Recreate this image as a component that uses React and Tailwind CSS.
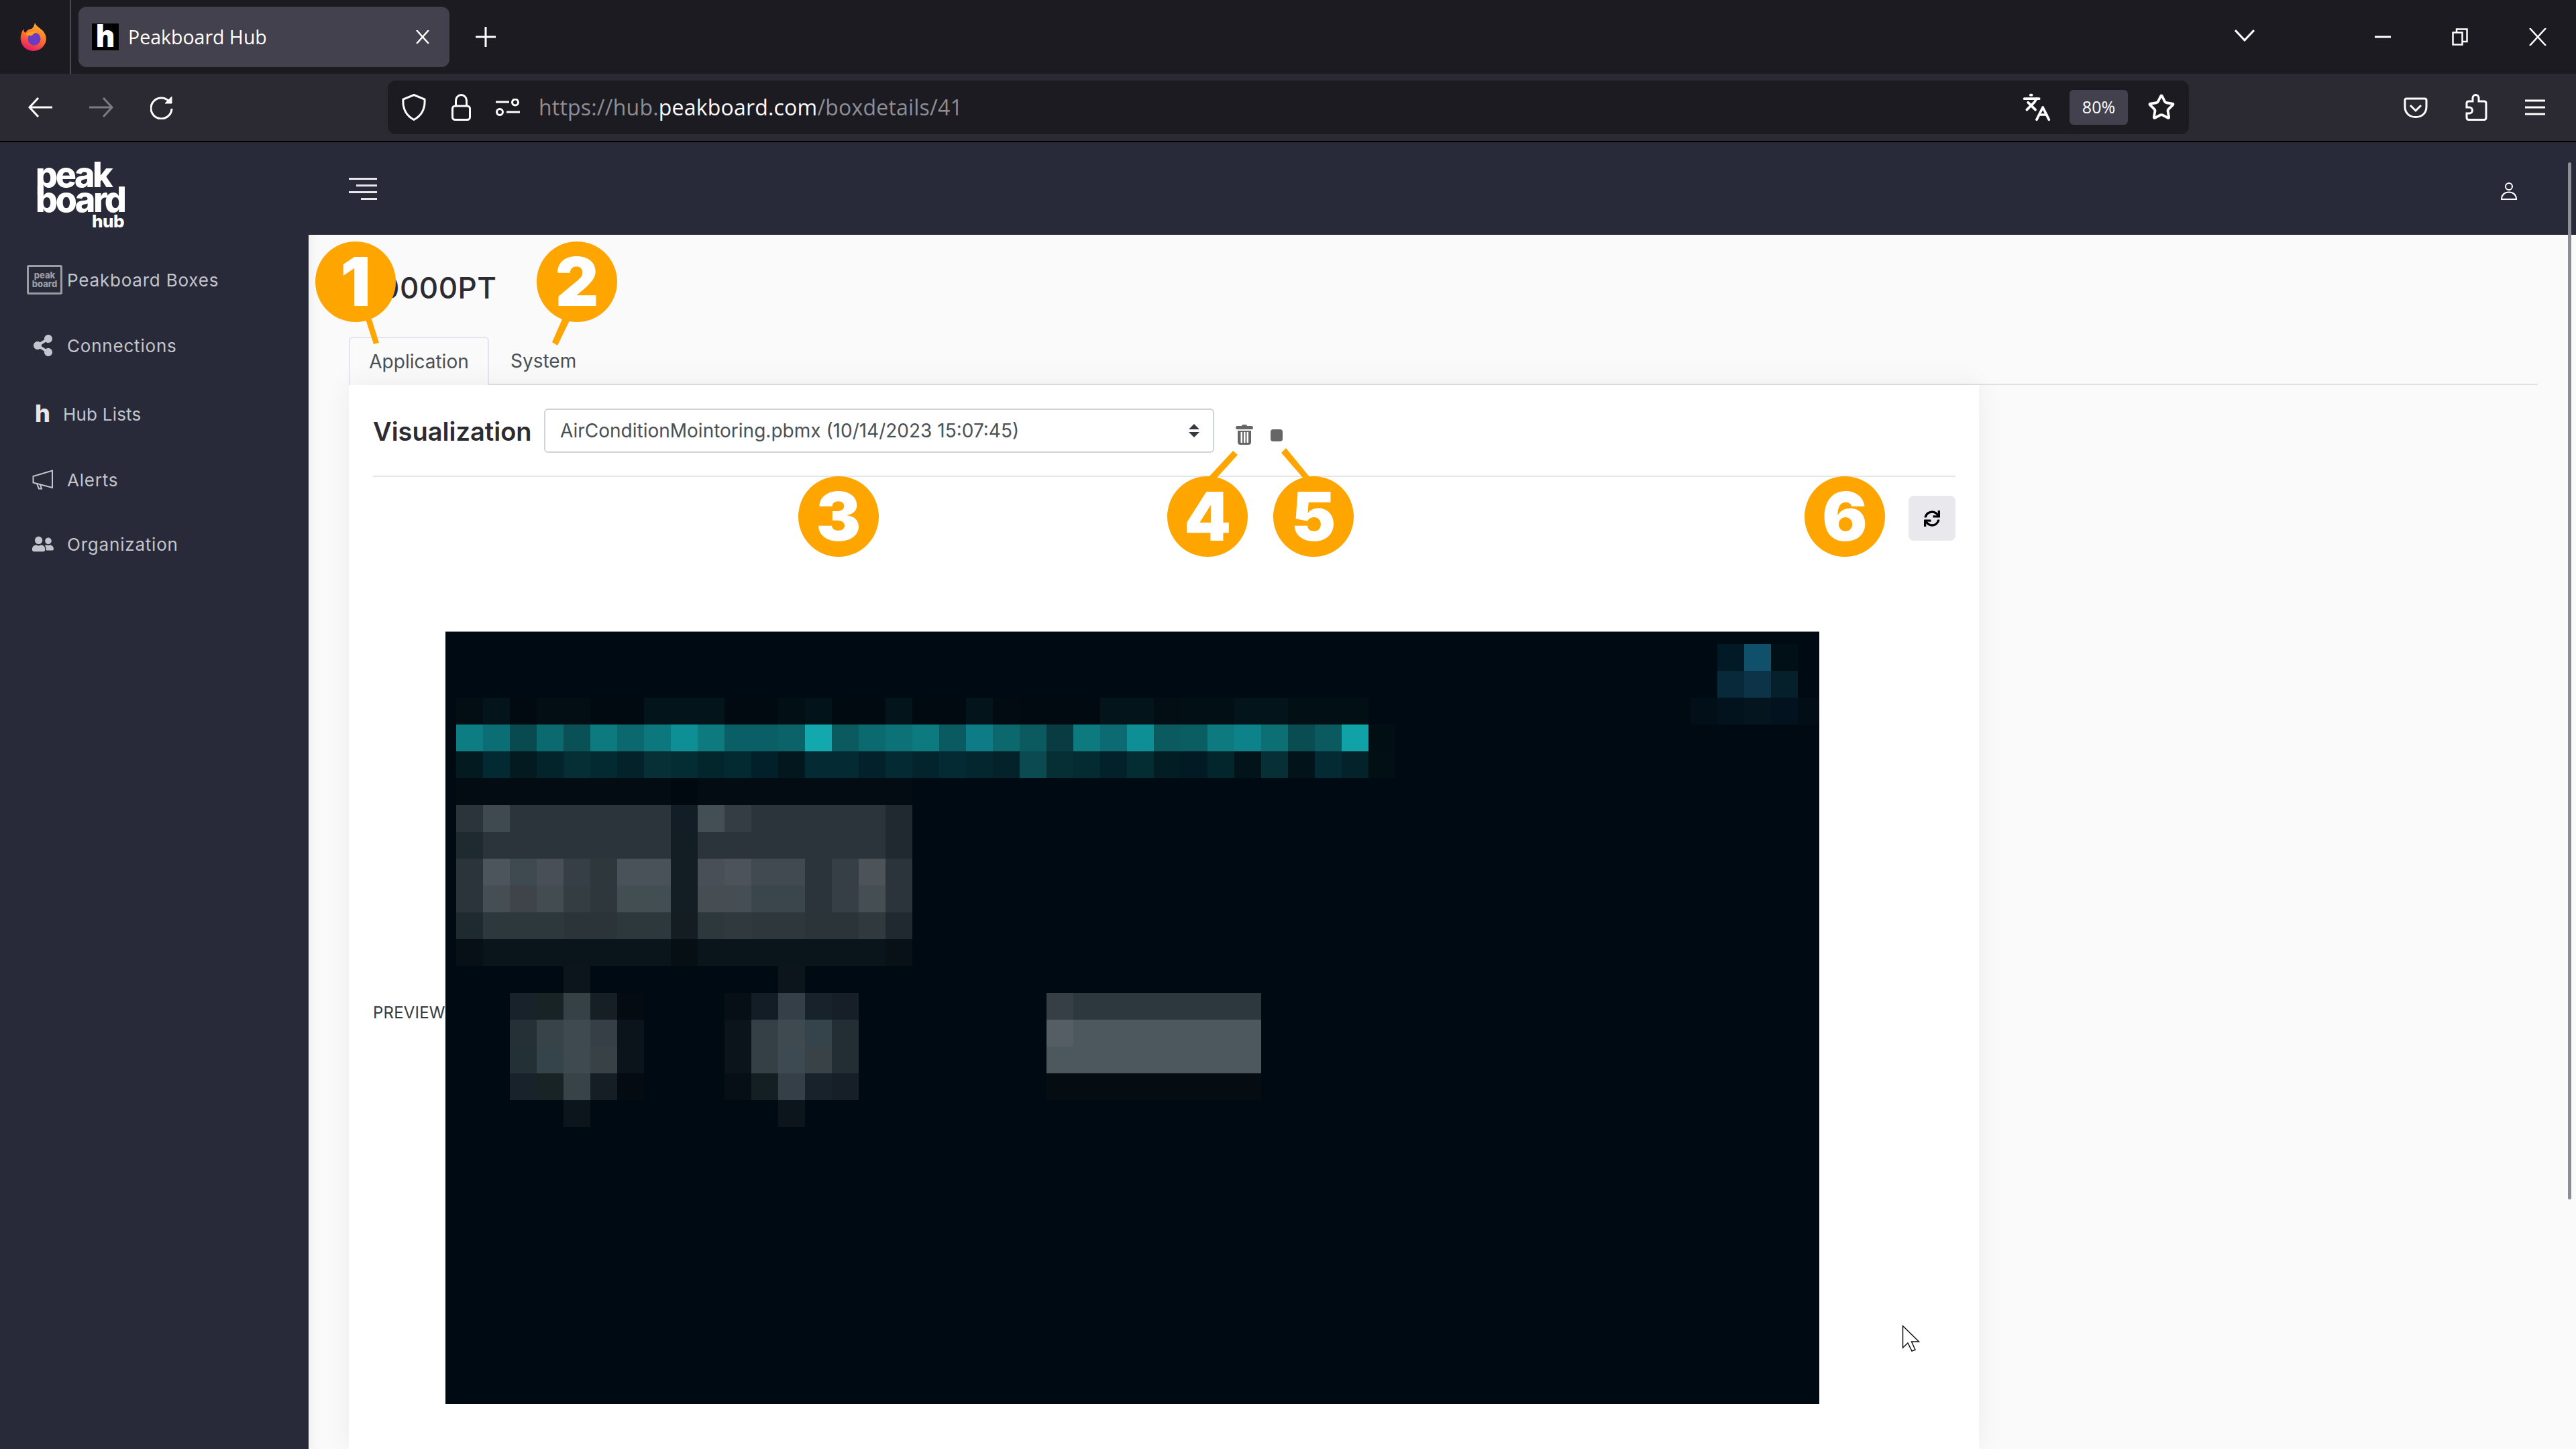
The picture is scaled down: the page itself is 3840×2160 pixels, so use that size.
import React from 'react';
import { Languages, Star } from 'lucide-react';
import { FaShareAlt, FaSync, FaUserFriends } from 'react-icons/fa';

// pixelated preview, one entry per 40px block: [x of first block, y, colours]
const blocks = [
    [680, 1040, ['#020e14','#03151b','#010a10','#020e13','#020e13','#010a11','#010a11','#03151b','#03141a','#03151b','#010a11','#010a11','#020f15','#03131a','#010a11','#010a11','#03151b','#010a11','#010a11','#03151b','#010b11','#010a11','#010a11','#010a11','#03151b','#03151b','#020e14','#020f15','#021015','#03151b','#03151b','#021015','#021015','#021015']],
    [680, 1080, ['#0c7d82','#0b6e74','#094a50','#0b6a70','#0a5057','#0c7a7e','#0a686e','#0c777c','#0e8f96','#0c7a7e','#0a5f66','#0a5f66','#0b6268','#12a8ad','#0a5a60','#0b6a70','#0c7278','#0c7a7e','#0a5a62','#0e7c86','#0b686c','#0a5a60','#093b42','#0c7a7e','#0b6a72','#0e8f96','#0a5a60','#0a5e62','#0c7a7e','#0d828a','#0b6f74','#094c52','#0a5a60','#10a2a6','#010e13']],
    [680, 1120, ['#021a20','#032a32','#021a20','#03242b','#062e35','#042a31','#03222a','#062f36','#042c33','#03262c','#042a31','#02202a','#02181e','#042b33','#042b33','#03212a','#042b33','#03242c','#042b33','#03262f','#03222a','#0a4a50','#062e35','#042b31','#03212a','#042c33','#021e24','#021a24','#03262c','#02141a','#062f36','#02141a','#042b33','#03222a','#020f14']],
    [680, 1160, ['#040c13','#040c13','#040c13','#040c13','#040c13','#040c13','#040c13','#040c13','#010910','#040c13','#040c13','#040c13','#040c13','#040c13','#040c13','#040c13','#040c13']],
    [680, 1200, ['#2a343a','#3f4a50','#2a343a','#2a343a','#2a343a','#2a343a','#2a343a','#2a343a','#131d25','#444f55','#333d42','#2a343a','#2a343a','#2a343a','#2a343a','#2a343a','#1f292f']],
    [680, 1240, ['#1f2a30','#2a343a','#2a343a','#2a343a','#2a343a','#2a343a','#2a343a','#2a343a','#131d24','#2a343a','#2a343a','#2a343a','#2a343a','#2a343a','#2a343a','#2a343a','#1f292f']],
    [680, 1280, ['#2a343a','#4c555b','#3f4a50','#484f56','#363f45','#2d373c','#4a5259','#4a5259','#131d24','#484f56','#4c545a','#404a50','#404a50','#2a343a','#363f45','#4c545a','#2a343a']],
    [680, 1320, ['#2a343a','#444e53','#3e444a','#434c50','#333d42','#2d373c','#434e53','#434e53','#131d24','#464d53','#444e53','#3b464c','#3b464c','#2a343a','#363f45','#444e53','#2a343a']],
    [680, 1360, ['#1f2a30','#2d383d','#2d383d','#2d383d','#2a3439','#2a3439','#2d383d','#2d383d','#131d22','#2d383d','#30393d','#2d373c','#2d373c','#2a3439','#2a3439','#30393d','#1f292f']],
    [680, 1400, ['#071016','#0a141b','#0a141b','#0a141b','#0a141b','#0a141b','#0a141b','#0a141b','#060f13','#0a141b','#0a141b','#0a141b','#0a141b','#0a141b','#0a141b','#0a141b','#081116']],
    [840, 1440, ['#0b151b']],
    [1160, 1440, ['#0b151b']],
    [760, 1480, ['#17222b','#182326','#364146','#151f24','#040c12']],
    [760, 1520, ['#243035','#384349','#3f4a50','#353f45','#0a141a']],
    [760, 1560, ['#233036','#35444b','#3e4a50','#384246','#0a141a']],
    [760, 1600, ['#17222b','#182326','#384347','#151e25','#040c12']],
    [840, 1640, ['#0b151b']],
    [1080, 1480, ['#060f15','#131d25','#353f48','#18222a','#161f27']],
    [1080, 1520, ['#0a141a','#343f46','#3f4a50','#35444b','#222e33']],
    [1080, 1560, ['#0a141a','#343f46','#3d4a52','#394246','#222e33']],
    [1080, 1600, ['#060f15','#141f24','#353f48','#18222a','#161f27']],
    [1160, 1640, ['#0b151b']],
    [1560, 1480, ['#363f45','#2d383e','#2d383e','#2d383e','#2d383e','#2d383e','#2d383e','#2d383e']],
    [1560, 1520, ['#555e64','#4c585e','#4c585e','#4c585e','#4c585e','#4c585e','#4c585e','#4c585e']],
    [1560, 1560, ['#4c585e','#4c585e','#4c585e','#4c585e','#4c585e','#4c585e','#4c585e','#4c585e']],
    [1560, 1600, ['#050d13','#050d13','#050d13','#050d13','#050d13','#050d13','#050d13','#050d13']],
    [2560, 960, ['#021a26','#10506a','#010f16']],
    [2560, 1000, ['#08293a','#0c3347','#051f2b']],
    [2520, 1040, ['#020f18','#03131e','#04151f','#03121f','#020d16']],
];

const Preview = () => (
    <svg width="2048" height="1152" viewBox="664 941 2048 1152" shapeRendering="crispEdges" className="shrink-0">
        <rect x="664" y="941" width="2048" height="1152" fill="#000a12" />
        {blocks.map(([x, y, colours]) =>
            colours.map((c, i) => <rect key={`${x}-${y}-${i}`} x={x + i * 40} y={y} width="40" height="40" fill={c} />)
        )}
        <rect x="664" y="941" width="2048" height="1" fill="#8a8f94" />
    </svg>
);

const Firefox = () => (
    <svg width="40" height="42" viewBox="0 0 40 42">
        <defs>
            <linearGradient id="fx" x1="0.7" y1="0" x2="0.3" y2="1">
                <stop offset="0" stopColor="#ffb52e" />
                <stop offset="0.55" stopColor="#ff6a2b" />
                <stop offset="1" stopColor="#e5156b" />
            </linearGradient>
        </defs>
        <path d="M22 0C24 5 30 8 34 12C38 17 40 22 38 29C35 37 28 42 20 42C10 42 2 35 1 26C0 20 2 14 5 9C5 12 6 14 8 15C10 11 14 9 17 9C20 7 21 4 22 0Z" fill="url(#fx)" />
        <circle cx="21" cy="24" r="9.5" fill="#6b3bc4" />
        <path d="M8 17C13 13 20 12 25 14C21 15 19 17 18 19C14 19 11 19 8 17Z" fill="#ffa31f" />
    </svg>
);

const HLogo = ({ className }) => <span className={`font-extrabold leading-none ${className}`}>h</span>;

const Ico = ({ w, h, children, className = 'text-white' }) => (
    <svg width={w} height={h} viewBox={`0 0 ${w} ${h}`} fill="none" stroke="currentColor" strokeWidth="3" className={`shrink-0 ${className}`}>
        {children}
    </svg>
);

const TabBar = () => (
    <div className="h-[110px] bg-[#1c1b22] flex items-stretch text-white shrink-0">
        <div className="w-[106px] border-r-2 border-[#4a4950] flex items-center pl-[30px]">
            <Firefox />
        </div>
        <div className="ml-[11px] mt-[10px] w-[553px] h-[90px] bg-[#42414d] rounded-xl flex items-center pl-[20px] pr-[30px]">
            <div className="w-[40px] h-[40px] bg-black flex items-center justify-center">
                <HLogo className="text-white text-[44px] -mt-[5px]" />
            </div>
            <span className="ml-[14px] text-[28.5px]">Peakboard Hub</span>
            <Ico w={20} h={20} className="ml-auto text-white">
                <path d="M1 0L19 20M19 0L1 20" strokeWidth="2.5" />
            </Ico>
        </div>
        <div className="ml-[39px] flex items-center">
            <Ico w={30} h={30}>
                <path d="M15 0V30M0 15H30" />
            </Ico>
        </div>
        <div className="ml-auto flex items-center pr-[44px]">
            <Ico w={30} h={18} className="mr-[179px] -mt-[4px]">
                <path d="M1 1L15 16L29 1" />
            </Ico>
            <Ico w={24} h={4} className="mr-[91px]">
                <path d="M0 2H24" />
            </Ico>
            <Ico w={24} h={26} className="mr-[91px]">
                <path d="M1.5 6.5H15.5V24.5H1.5ZM7 6V1.5H22.5V20H16" strokeWidth="2.5" />
            </Ico>
            <Ico w={26} h={26}>
                <path d="M1 0L25 26M25 0L1 26" strokeWidth="2.5" />
            </Ico>
        </div>
    </div>
);

const ToolBar = () => (
    <div className="h-[100px] bg-[#2b2a33] flex items-center text-white shrink-0">
        <Ico w={36} h={30} className="ml-[42px]">
            <path d="M36 15H2M15 1L2 15L15 29" />
        </Ico>
        <Ico w={36} h={30} className="ml-[55px] text-[#7c7b82]">
            <path d="M0 15H34M21 1L34 15L21 29" />
        </Ico>
        <Ico w={34} h={36} className="ml-[55px]">
            <path d="M28 9A15.5 15.5 0 1 0 32 20" />
            <path d="M32 2V12H22Z" fill="currentColor" strokeWidth="1" />
        </Ico>
        <div className="ml-[320px] w-[2685px] h-[80px] bg-[#1c1b22] rounded-xl flex items-center">
            <Ico w={36} h={40} className="ml-[21px]">
                <path d="M18 1.5L34 8C35 22 30 32 18 38.5C6 32 1 22 2 8Z" />
            </Ico>
            <Ico w={29} h={40} className="ml-[38px]">
                <path d="M6.5 18V10A8 8.5 0 0 1 22.5 10V18" />
                <rect x="1.5" y="18" width="26" height="20.5" rx="4" />
            </Ico>
            <Ico w={36} h={26} className="ml-[37px]">
                <path d="M0 5H20M16 20H36" />
                <circle cx="29" cy="5.5" r="4.5" />
                <circle cx="6" cy="20" r="4.5" />
            </Ico>
            <div className="ml-[28px] text-[32px] text-[#8f8e94] tracking-[0.2px]">
                https://hub.<span className="text-[#fbfbfe]">peakboard.com</span>/boxdetails/41
            </div>
            <Languages size={44} strokeWidth={2} className="ml-auto" />
            <div className="ml-[27px] w-[87px] h-[52px] rounded-md bg-[#42414d] flex items-center justify-center text-[25px]">80%</div>
            <Star size={42} strokeWidth={2.2} className="ml-[29px] mr-[20px]" />
        </div>
        <Ico w={36} h={31} className="ml-[320px]">
            <path d="M2 4.5Q2 2 4.5 2H31.5Q34 2 34 4.5V14C34 24 27 29.5 18 29.5C9 29.5 2 24 2 14Z" />
            <path d="M10 12L18 20L26 12" />
        </Ico>
        <Ico w={34} h={40} className="ml-[55px]">
            <path d="M12 11V6A4.5 4.5 0 0 1 21 6V11H29Q32 11 32 14V35Q32 38.500 29 38.500H6Q3 38.500 3 35V29H7A4 4 0 0 0 7 20H3V14Q3 11 6 11Z" />
        </Ico>
        <Ico w={30} h={24} className="ml-[56px]">
            <path d="M0 2H30M0 12H30M0 22H30" />
        </Ico>
    </div>
);

const navItems = [
    { label: 'Peakboard Boxes', cls: 'h-[98px]', icon: (
        <div className="w-[53px] h-[44px] border-[3px] border-[#9c9da4] rounded-[3px] flex flex-col items-center justify-center text-[#9c9da4] text-[13px] font-extrabold leading-[13px]">
            <span>peak</span>
            <span>board</span>
        </div>
    ) },
    { label: 'Connections', cls: 'h-[98px]', icon: <FaShareAlt size={32} className="ml-[8px]" /> },
    { label: 'Hub Lists', cls: 'h-[98px] mt-[4px]', narrow: true, icon: <HLogo className="ml-[12px] text-[#e6e6ea] text-[36px] -mt-[2px]" /> },
    { label: 'Alerts', cls: 'h-[98px]', icon: (
        <Ico w={32} h={30} className="ml-[8px] text-[#c3c5cc]">
            <path d="M1.500 10L30 1.500V27L1.500 19.500ZM7 21L10 28.500H14L12 23" strokeWidth="2" />
        </Ico>
    ) },
    { label: 'Organization', cls: 'h-[98px] -mt-[2px]', icon: <FaUserFriends size={32} className="ml-[8px]" /> },
];

const Sidebar = () => (
    <aside className="w-[460px] shrink-0 bg-[#282a39] text-[#c3c5cc] text-[26px]">
        <div className="h-[156px] pl-[53px] pt-[30px] text-white font-extrabold">
            <div className="text-[52px] leading-[37px] tracking-[-3.5px]">peak</div>
            <div className="text-[52px] leading-[37px] tracking-[-3.5px]">board</div>
            <div className="text-[26px] leading-[22px] mt-[3px] pl-[84px] tracking-[-0.5px]">hub</div>
        </div>
        {navItems.map((item) => (
            <div key={item.label} className={`flex items-center pl-[40px] ${item.cls}`}>
                <div className={`${item.narrow ? 'w-[54px]' : 'w-[60px]'} flex items-center`}>{item.icon}</div>
                <span className={item.narrow ? 'tracking-[0.2px]' : 'tracking-[0.8px]'}>{item.label}</span>
            </div>
        ))}
    </aside>
);

const Header = () => (
    <header className="h-[138px] shrink-0 bg-[#282a39] flex items-center pl-[60px] pr-[87px] text-white">
        <div className="flex flex-col items-end w-[42px] gap-[7px]">
            <div className="h-[3px] w-full bg-[#e8e8ea]" />
            <div className="h-[3px] w-[31px] bg-[#e8e8ea]" />
            <div className="h-[3px] w-full bg-[#e8e8ea]" />
            <div className="h-[3px] w-[24px] bg-[#e8e8ea]" />
        </div>
        <Ico w={26} h={26} className="ml-auto mt-[7px]">
            <ellipse cx="13" cy="6" rx="5" ry="5" strokeWidth="2" />
            <path d="M2 25C2 18 7 14.500 13 14.500C19 14.500 24 18 24 25Z" strokeWidth="2" />
        </Ico>
    </header>
);

const Card = () => (
    <div className="w-[2430px] flex-1 bg-white shadow-[0_0_40px_rgba(0,0,0,0.06)] pl-[36px] pr-[35px] pt-[35px]">
        <div className="flex items-start pb-[34px] border-b-2 border-[#e5e5e5]">
            <div className="w-[255px] h-[66px] pt-[2px] flex items-center text-[38px] font-semibold text-[#2b2b31]">Visualization</div>
            <div className="w-[999px] h-[66px] border-2 border-[#ced4da] rounded-md flex items-center pl-[22px] pr-[20px] text-[28px] text-[#495057]">
                <span>AirConditionMointoring.pbmx (10/14/2023 15:07:45)</span>
                <svg width="16" height="20" viewBox="0 0 16 20" fill="#343a40" className="ml-auto">
                    <path d="M8 0L16 8H0ZM0 12H16L8 20Z" />
                </svg>
            </div>
            <svg width="26" height="30" viewBox="0 0 26 30" fill="#666" className="ml-[32px] mt-[24px]">
                <path d="M9 2Q9 0 11 0H15Q17 0 17 2H24Q26 2 26 4.500Q26 7 24 7H2Q0 7 0 4.500Q0 2 2 2Z" />
                <path d="M3 9H23V26Q23 30 19 30H7Q3 30 3 26ZM7.500 11V27H10V11ZM12 11V27H14.500V11ZM16.500 11V27H19V11Z" fillRule="evenodd" />
            </svg>
            <div className="ml-[26px] mt-[31px] w-[18px] h-[18px] bg-[#666] rounded-[4px]" />
        </div>
        <div className="flex justify-end mt-[28px]">
            <div className="w-[70px] h-[67px] rounded-lg bg-[#e8e8ed] flex items-center justify-center">
                <FaSync size={24} className="text-black" />
            </div>
        </div>
        <div className="flex items-center mt-[135px]">
            <div className="w-[108px] mb-[14px] text-[24px] tracking-[0.2px] text-[#343a40] whitespace-nowrap">PREVIEW</div>
            <Preview />
        </div>
    </div>
);

const Content = () => (
    <main className="flex-1 min-h-0 bg-[#fafafa] flex flex-col pl-[60px] pr-[57px] overflow-hidden shadow-[inset_20px_0_20px_-20px_rgba(0,0,0,0.08)]">
        <h1 className="pl-[47px] mt-[55px] h-[97px] text-[44px] leading-[48px] font-medium text-[#2b2b31] tracking-[0.5px]">0000PT</h1>
        <div className="flex h-[72px] border-b-2 border-[#dee2e6] text-[28px] text-[#495057] shrink-0">
            <div className="w-[209px] h-[72px] border-2 border-b-0 border-[#e3e6ea] rounded-t-md bg-[#fafafa] flex items-center justify-center">Application</div>
            <div className="ml-[32px] flex items-center h-[72px]">System</div>
        </div>
        <Card />
    </main>
);

// orange numbered callouts laid over the screenshot
const Callouts = () => (
    <>
        <svg className="absolute inset-0" width="3840" height="2160" viewBox="0 0 3840 2160" fill="#ffa500">
            <polygon points="545,476 554,476 565,511 557,513" />
            <polygon points="838,476 850,476 831,515 823,510" />
            <polygon points="1801,712 1814,712 1845,678 1838,672" />
            <polygon points="1942,712 1953,712 1917,668 1910,675" />
        </svg>
        {[
            ['1', 'left-[470px] top-[360px]'],
            ['2', 'left-[800px] top-[360px]'],
            ['3', 'left-[1190px] top-[710px]'],
            ['4', 'left-[1740px] top-[710px]'],
            ['5', 'left-[1898px] top-[710px]'],
            ['6', 'left-[2690px] top-[710px]'],
        ].map(([n, pos]) => (
            <div key={n} className={`absolute ${pos} w-[120px] h-[120px] rounded-full bg-[#ffa500] flex items-center justify-center text-white text-[100px] font-black leading-none`}>
                {n}
            </div>
        ))}
    </>
);

const Cursor = () => (
    <svg className="absolute left-[2830px] top-[1970px]" width="40" height="50" viewBox="0 0 40 50" fill="#fff" stroke="#111" strokeWidth="1.500">
        <path d="M6.500 6.500V39L14 32L20 44L25 42L19.500 30H30.500Z" />
    </svg>
);

const App = () => (
    <div className="relative w-[3840px] h-[2160px] overflow-hidden flex flex-col font-[family-name:Inter,sans-serif]">
        <div className="font-[family-name:'Open_Sans',sans-serif]">
            <TabBar />
            <ToolBar />
        </div>
        <div className="h-[2px] bg-black shrink-0" />
        <div className="flex flex-1 min-h-0">
            <Sidebar />
            <div className="flex-1 flex flex-col min-w-0">
                <Header />
                <Content />
            </div>
        </div>
        <Callouts />
        <Cursor />
        <div className="absolute left-[3828px] top-[242px] w-[5px] h-[1546px] rounded-full bg-[#8d8e95]" />
    </div>
);

export default App;
